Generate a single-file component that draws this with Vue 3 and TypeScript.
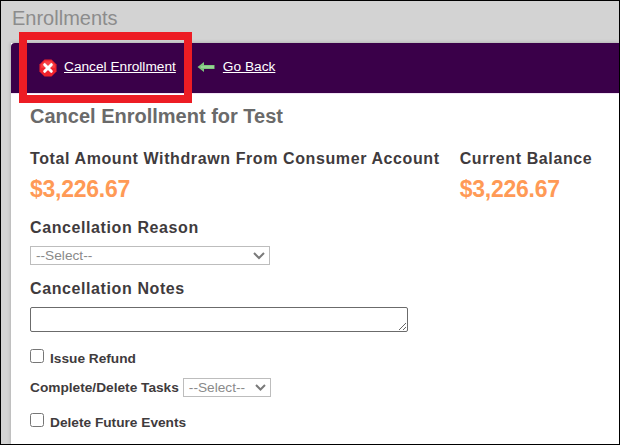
<script setup lang="ts">
const amount = '$3,226.67'
</script>

<template>
  <div class="frame">
    <h1 class="page-title">Enrollments</h1>
    <div class="panel">
      <nav class="toolbar">
        <a class="action">
          <svg class="icon" width="18" height="18" viewBox="0 0 18 18">
            <path d="M5.500 0.500h7L17.500 5.500v7L12.500 17.500h-7L0.500 12.500v-7z" fill="#f0222c" />
            <path d="M5.800 2.200h6.400l3.600 3.600v3H2.200v-3z" fill="#ff5c5c" opacity=".55" />
            <path d="M5.700 5.700l6.600 6.600M12.300 5.700l-6.600 6.600" stroke="#fff" stroke-width="3" stroke-linecap="round" />
          </svg>
          <span class="link">Cancel Enrollment</span>
        </a>
        <a class="action back">
          <svg class="icon-back" width="18" height="12" viewBox="0 0 18 12">
            <path d="M0.500 6L7 1v3h10.500v4H7v3z" fill="#7cc47c" />
            <path d="M4 6h13" stroke="#a9dca5" stroke-width="1.200" />
          </svg>
          <span class="link">Go Back</span>
        </a>
      </nav>
      <div class="content">
        <h2 class="heading">Cancel Enrollment for Test</h2>
        <div class="totals">
          <div>
            <div class="label">Total Amount Withdrawn From Consumer Account</div>
            <div class="amount">{{ amount }}</div>
          </div>
          <div>
            <div class="label">Current Balance</div>
            <div class="amount">{{ amount }}</div>
          </div>
        </div>
        <div class="label section-a">Cancellation Reason</div>
        <div class="select select-wide">
          <span>--Select--</span>
          <svg width="14" height="9" viewBox="0 0 14 9"><path d="M2 2l5 5 5-5" fill="none" stroke="#7a7a7a" stroke-width="2" /></svg>
        </div>
        <div class="label section-b">Cancellation Notes</div>
        <textarea class="notes"></textarea>
        <label class="check check-a"><input type="checkbox" /><span>Issue Refund</span></label>
        <div class="tasks">
          <span>Complete/Delete Tasks</span>
          <div class="select select-small">
            <span>--Select--</span>
            <svg width="13" height="9" viewBox="0 0 13 9"><path d="M2 2l4.500 4.500L11 2" fill="none" stroke="#7a7a7a" stroke-width="2" /></svg>
          </div>
        </div>
        <label class="check check-b"><input type="checkbox" /><span>Delete Future Events</span></label>
      </div>
    </div>
    <div class="highlight"></div>
  </div>
</template>

<style>
html, body { margin: 0; padding: 0; }
</style>

<style scoped>
.frame {
  position: relative;
  box-sizing: border-box;
  width: 620px;
  height: 445px;
  overflow: hidden;
  border: 1px solid #000;
  background: #d3d3d3;
  padding-left: 10px;
  font-family: "Liberation Sans", Arial, sans-serif;
}
.page-title {
  margin: 0;
  height: 42px;
  padding: 5px 0 0 1px;
  box-sizing: border-box;
  font-size: 20px;
  line-height: 24px;
  font-weight: 400;
  color: #8c8c8c;
}
.panel {
  background: #fff;
  height: 402px;
  box-shadow: 0 0 4px rgba(0, 0, 0, 0.22);
}
.toolbar {
  display: flex;
  align-items: center;
  box-sizing: border-box;
  height: 50px;
  padding: 0 0 2px 28px;
  background: #3a0049;
  border-radius: 4px 0 0 0;
  box-shadow: 0 1px 0 #f1e4f5;
}
.action { display: flex; align-items: center; }
.icon { margin-right: 7px; margin-top: 2px; }
.back { margin-left: 21px; }
.icon-back { margin-right: 8px; margin-top: 0; }
.link {
  color: #fff;
  font-size: 13.7px;
  line-height: 16px;
  text-decoration: underline;
}
.content { padding: 12px 0 0 19px; color: #3f3b3d; }
.heading {
  margin: 0;
  font-size: 20px;
  line-height: 23px;
  font-weight: 700;
  color: #6a6a6a;
}
.totals { display: flex; gap: 20px; margin-top: 22px; }
.label {
  font-size: 16px;
  line-height: 18px;
  font-weight: 700;
  letter-spacing: 0.6px;
  white-space: nowrap;
  color: #3f3b3d;
}
.amount {
  margin-top: 8px;
  font-size: 23px;
  line-height: 26px;
  font-weight: 700;
  letter-spacing: -0.25px;
  color: #ff9a56;
}
.section-a { margin-top: 17px; }
.select {
  display: flex;
  align-items: center;
  justify-content: space-between;
  box-sizing: border-box;
  height: 19px;
  border: 1px solid #bdbdbd;
  background: #fff;
  color: #8a8a8a;
  font-size: 13.7px;
}
.select-wide { width: 240px; margin-top: 9px; padding: 0 3px 0 5px; }
.section-b { margin-top: 15px; }
.notes {
  display: block;
  box-sizing: border-box;
  width: 378px;
  height: 25px;
  margin: 9px 0 0;
  border: 1px solid #6b6b6b;
  border-radius: 2px;
  background: #fff;
  padding: 2px;
}
.check {
  display: flex;
  align-items: center;
  font-size: 13.7px;
  font-weight: 700;
  color: #3f3b3d;
}
.check input {
  width: 14px;
  height: 14px;
  margin: 0 6px 0 0;
  position: relative;
  top: -3px;
}
.check-a { margin-top: 19px; }
.tasks {
  display: flex;
  align-items: center;
  gap: 4px;
  margin-top: 12px;
  font-size: 13.7px;
  font-weight: 700;
  color: #3f3b3d;
}
.select-small { width: 88px; padding: 0 3px 0 5px; font-weight: 400; }
.check-b { margin-top: 18px; }
.highlight {
  position: absolute;
  left: 18px;
  top: 31px;
  width: 173px;
  height: 71px;
  box-sizing: border-box;
  border: 8px solid #ed1c24;
}
</style>
